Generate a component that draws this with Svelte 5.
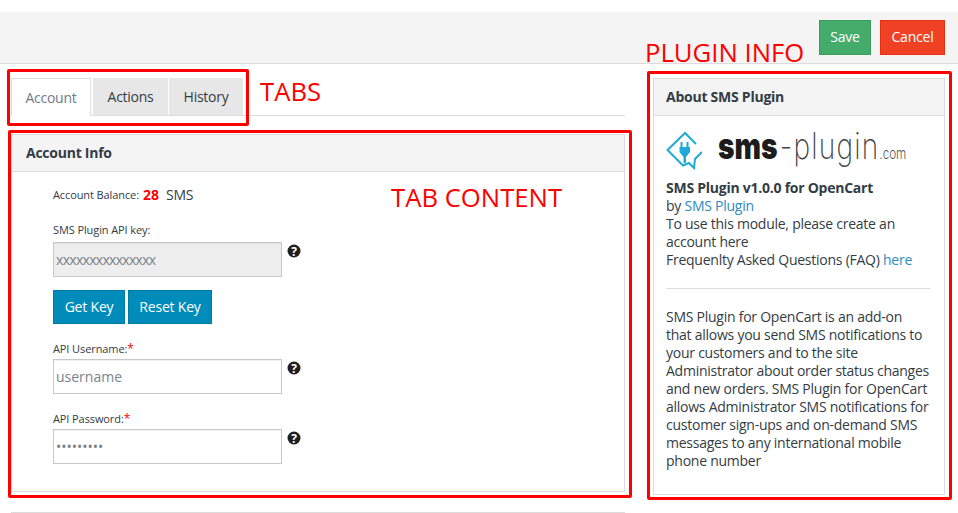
<script lang="ts">
	const tabs = ['Account', 'Actions', 'History'];
	let active = $state('Account');
</script>

<div class="page">
	<header class="topbar">
		<button class="btn save">Save</button>
		<button class="btn cancel">Cancel</button>
	</header>

	<div class="layout">
		<main class="main">
			<nav class="tabs">
				{#each tabs as tab}
					<button class="tab" class:active={active === tab} onclick={() => (active = tab)}>{tab}</button>
				{/each}
			</nav>

			<section class="panel account">
				<h3 class="panel-head">Account Info</h3>
				<div class="form">
					<div class="balance">
						<span class="lbl">Account Balance:</span>
						<b>28</b>
						<span class="unit">SMS</span>
					</div>

					<label class="lbl field-label" for="key">SMS Plugin API key:</label>
					<div class="field">
						<input id="key" class="input" disabled value="xxxxxxxxxxxxxxx" />
						{@render help()}
					</div>

					<div class="key-actions">
						<button class="btn blue">Get Key</button>
						<button class="btn blue">Reset Key</button>
					</div>

					<label class="lbl field-label" for="user">API Username:<em>*</em></label>
					<div class="field tight">
						<input id="user" class="input" placeholder="username" />
						{@render help()}
					</div>

					<label class="lbl field-label second" for="pass">API Password:<em>*</em></label>
					<div class="field tight">
						<input id="pass" class="input" type="password" value="aaaaaaaaa" />
						{@render help()}
					</div>
				</div>
			</section>
			<div class="next-panel"></div>
		</main>

		<aside class="panel side">
			<h3 class="panel-head">About SMS Plugin</h3>
			<div class="side-body">
				<div class="logo">
					<svg width="36" height="40" viewBox="0 0 36 40" fill="none">
						<path d="M30 14 L19 3 L1.500 20 L17 35.500 L23 33 L28 38 L29 29 L36 22" stroke="#1fa9d6" stroke-width="2" />
						<path d="M14.500 12 h2 v5 h4 v-5 h2 v5 h1.500 v5 l-4 5 v6 h-2.500 v-6 l-4 -5 v-5 h1 z" fill="#1fa9d6" />
					</svg>
					<span class="logo-text"><span class="logo-sms">sms</span><span class="logo-plugin">-plugin</span><span class="logo-com">.com</span></span>
				</div>
				<p class="info">
					<strong>SMS Plugin v1.0.0 for OpenCart</strong><br />
					by <a href="#top">SMS Plugin</a><br />
					To use this module, please create an account here<br />
					Frequenlty Asked Questions (FAQ) <a href="#top">here</a>
				</p>
				<hr />
				<p class="info">
					SMS Plugin for OpenCart is an add-on that allows you send SMS notifications to your customers and to the site Administrator about order status changes and new orders. SMS Plugin for OpenCart allows Administrator SMS notifications for customer sign-ups and on-demand SMS messages to any international mobile phone number
				</p>
			</div>
		</aside>
	</div>

	<!-- red annotations drawn over the screenshot -->
	<div class="mark mark-tabs"></div>
	<div class="mark mark-content"></div>
	<div class="mark mark-info"></div>
	<span class="note note-tabs">TABS</span>
	<span class="note note-content">TAB CONTENT</span>
	<span class="note note-info">PLUGIN INFO</span>
</div>

{#snippet help()}
	<svg class="help" width="14" height="14" viewBox="0 0 14 14">
		<circle cx="7" cy="7" r="6.500" fill="#1f1f1f" />
		<text x="7" y="11.500" text-anchor="middle">?</text>
	</svg>
{/snippet}

<style>
	:global(body) {
		margin: 0;
		background: #fff;
	}

	.page {
		position: relative;
		height: 513px;
		overflow: hidden;
		padding-top: 12px;
		box-sizing: border-box;
		font-family: 'Open Sans', sans-serif;
		font-size: 14px;
		line-height: 18px;
		letter-spacing: -0.25px;
		color: #333c44;
	}

	.topbar {
		height: 52px;
		box-sizing: border-box;
		padding: 8px 13px 0 0;
		display: flex;
		justify-content: flex-end;
		align-items: flex-start;
		gap: 9px;
		background: #f4f4f4;
		border-bottom: 1px solid #dcdcdc;
	}

	.btn {
		font-family: inherit;
		font-size: 14px;
		letter-spacing: -0.2px;
		color: #fff;
		border: 1px solid transparent;
		padding: 0 0 2px;
		height: 35px;
		cursor: pointer;
	}

	.save {
		width: 52px;
		background: #43ac6a;
		border-color: #3a9d5d;
	}

	.cancel {
		width: 65px;
		background: #f04124;
		border-color: #ea2f10;
	}

	.layout {
		display: flex;
		gap: 28px;
		padding: 14px 13px 0 11px;
	}

	.main {
		width: 614px;
		flex: none;
	}

	.tabs {
		display: flex;
		gap: 1px;
		height: 38px;
		box-sizing: border-box;
		border-bottom: 1px solid #dcdcdc;
	}

	.tab {
		width: 75px;
		height: 37px;
		padding: 0;
		border: 0;
		background: #e7e7e7;
		font-family: inherit;
		font-size: 14px;
		letter-spacing: -0.27px;
		color: #333c44;
	}

	.tab:nth-child(3) {
		width: 74px;
	}

	.tab.active {
		width: 80px;
		height: 38px;
		margin-right: 1px;
		background: #fff;
		color: #6f7b85;
		border: 1px solid #dcdcdc;
		border-bottom: 0;
	}

	.panel {
		border: 1px solid #dcdcdc;
		box-sizing: border-box;
	}

	.panel-head {
		margin: 0;
		height: 37px;
		box-sizing: border-box;
		padding: 9px 14px;
		background: #f4f4f4;
		border-bottom: 1px solid #dcdcdc;
		font-size: 14px;
		font-weight: 700;
		line-height: 18px;
	}

	.account {
		margin-top: 18px;
		height: 358px;
	}

	.form {
		padding: 14px 0 0 41px;
	}

	.balance {
		display: flex;
		align-items: center;
		gap: 4px;
		height: 18px;
	}

	.balance b {
		color: #f00;
		font-size: 14px;
		letter-spacing: 0;
	}

	.unit {
		margin-left: 3px;
		letter-spacing: -0.3px;
	}

	.lbl {
		font-size: 11px;
		letter-spacing: -0.1px;
	}

	.field-label {
		display: block;
		margin-top: 18px;
		line-height: 16px;
	}

	.field-label em {
		color: #f00;
		font-style: normal;
		font-size: 12px;
	}

	.second {
		margin-top: 17px;
	}

	.field {
		display: flex;
		align-items: flex-start;
		gap: 5px;
		margin-top: 4px;
	}

	.tight {
		margin-top: 2px;
	}

	.input {
		width: 229px;
		height: 35px;
		box-sizing: border-box;
		padding: 0 2px;
		border: 1px solid #c8c8c8;
		box-shadow: inset 0 1px 1px rgba(0, 0, 0, 0.06);
		background: #fff;
		font-family: inherit;
		font-size: 14px;
		color: #7b838a;
		outline: none;
	}

	.input::placeholder {
		color: #7b838a;
		opacity: 1;
	}

	.input:disabled {
		background: #eee;
		letter-spacing: -0.7px;
	}

	.help {
		flex: none;
		margin-top: 2px;
	}

	.help text {
		font-family: 'Open Sans', sans-serif;
		font-size: 12px;
		font-weight: 700;
		fill: #fff;
	}

	.key-actions {
		display: flex;
		gap: 3px;
		margin-top: 13px;
		margin-bottom: -1px;
	}

	.blue {
		height: 34px;
		width: 72px;
		background: #008cba;
		border-color: #007ba4;
	}

	.blue + .blue {
		width: 84px;
	}

	.next-panel {
		margin-top: 20px;
		height: 10px;
		border: 1px solid #dcdcdc;
		border-bottom: 0;
	}

	.side {
		width: 292px;
		flex: none;
		height: 417px;
	}

	.side .panel-head {
		padding-left: 12px;
	}

	.side-body {
		padding: 14px 14px 0 12px;
	}

	.logo {
		display: flex;
		align-items: center;
		gap: 16px;
		height: 40px;
		margin-bottom: 9px;
	}

	.logo svg {
		flex: none;
	}

	.logo-text {
		display: flex;
		align-items: baseline;
		font-family: 'Inter', sans-serif;
		letter-spacing: 0;
		white-space: nowrap;
		transform: scaleX(0.78);
		transform-origin: left;
	}

	.logo-sms {
		font-size: 36px;
		font-weight: 900;
		color: #1c1c1c;
	}

	.logo-plugin {
		margin-left: 3px;
		font-size: 36px;
		font-weight: 200;
		letter-spacing: 1.500px;
		color: #444;
	}

	.logo-com {
		font-size: 15px;
		font-weight: 300;
		color: #555;
	}

	.info {
		margin: 0;
	}

	a {
		color: #2b8cbe;
		text-decoration: none;
	}

	hr {
		border: 0;
		border-top: 1px solid #dcdcdc;
		margin: 19px 0;
	}

	.mark {
		position: absolute;
		box-sizing: border-box;
		border: 3px solid #f00;
		border-radius: 2px;
		pointer-events: none;
	}

	.mark-tabs {
		left: 7px;
		top: 69px;
		width: 242px;
		height: 57px;
	}

	.mark-content {
		left: 8px;
		top: 130px;
		width: 624px;
		height: 368px;
	}

	.mark-info {
		left: 647px;
		top: 71px;
		width: 305px;
		height: 429px;
	}

	.note {
		position: absolute;
		color: #f00;
		font-size: 25.7px;
		letter-spacing: 0;
		line-height: 30px;
		white-space: nowrap;
	}

	.note-tabs {
		left: 260px;
		top: 77px;
	}

	.note-content {
		left: 391px;
		top: 183px;
	}

	.note-info {
		left: 645px;
		top: 38px;
	}
</style>
